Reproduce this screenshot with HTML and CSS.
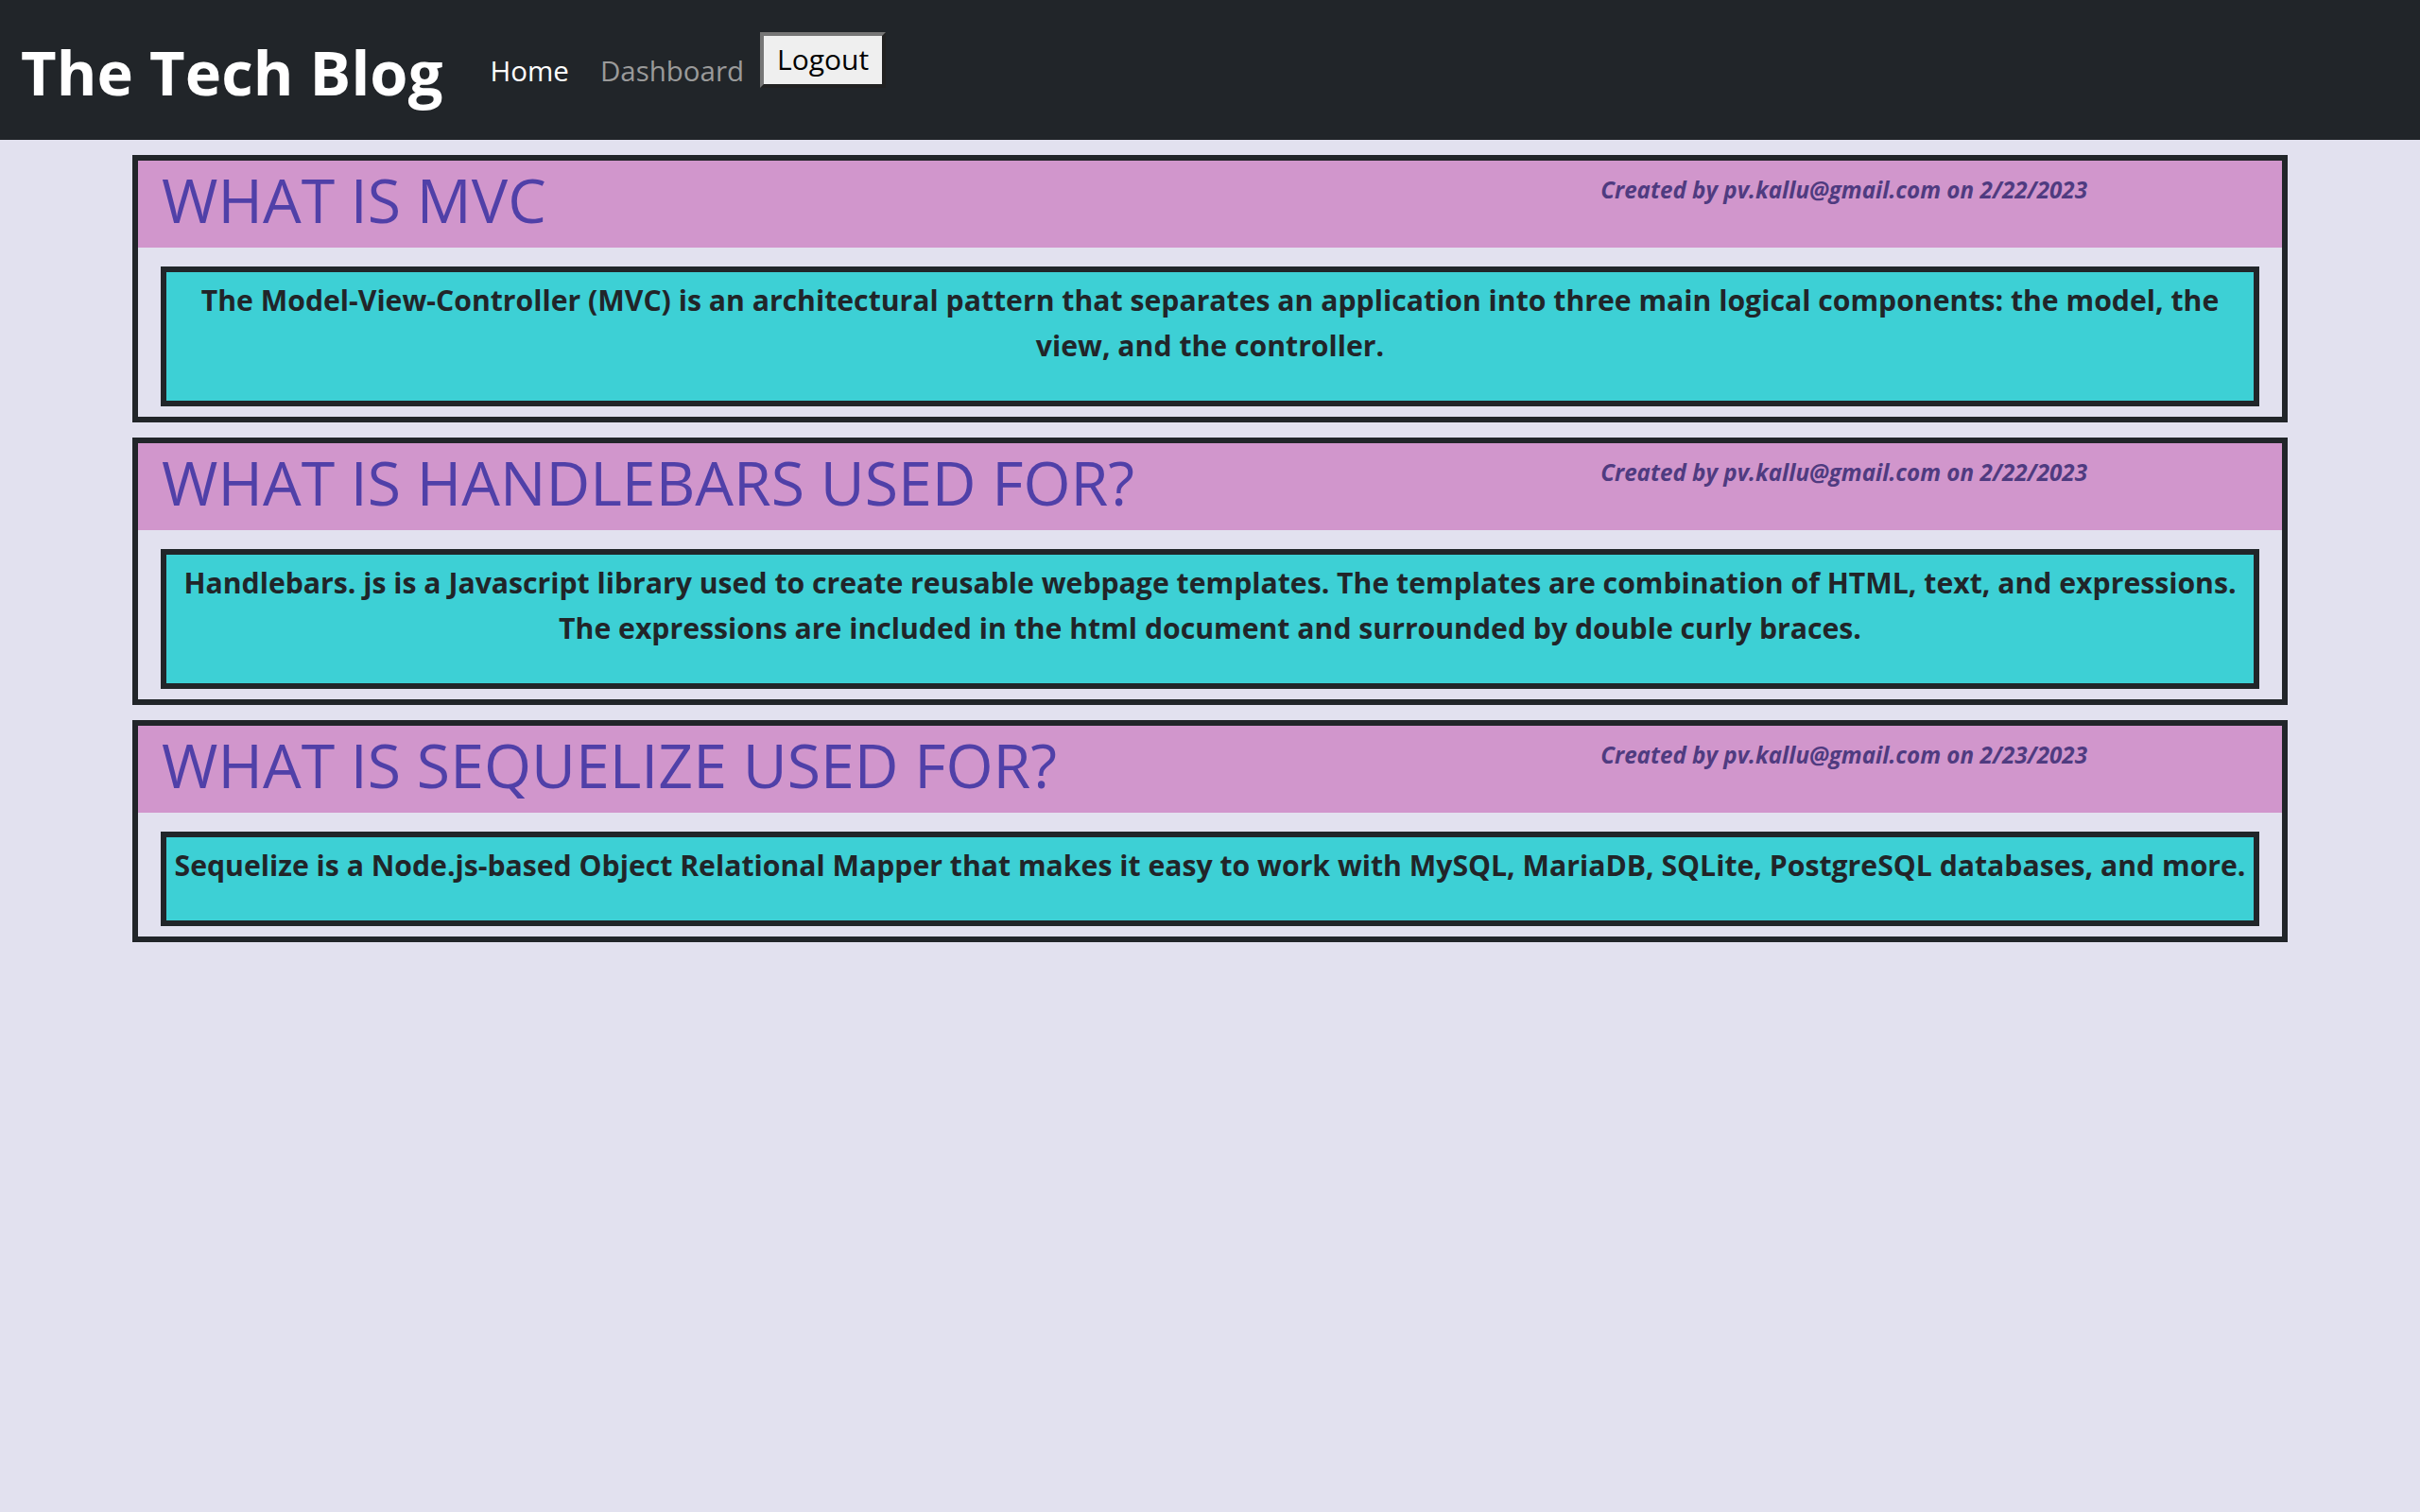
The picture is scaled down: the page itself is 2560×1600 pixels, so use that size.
FILE: index.html
```html
<!DOCTYPE html>
<html lang="en">
<head>
<meta charset="utf-8">
<title>The Tech Blog</title>
<link rel="stylesheet" href="styles.css">
</head>
<body>
<header class="site-header">
  <h1 class="brand">The Tech Blog</h1>
  <nav class="nav">
    <a class="nav-link active" href="#">Home</a>
    <a class="nav-link" href="#">Dashboard</a>
    <button class="logout" type="button">Logout</button>
  </nav>
</header>
<main class="posts">
  <article class="post">
    <div class="post-head">
      <h2 class="post-title">WHAT IS MVC</h2>
      <p class="post-meta">Created by pv.kallu@gmail.com on 2/22/2023</p>
    </div>
    <div class="post-body">
      <p>The Model-View-Controller (MVC) is an architectural pattern that separates an application into three main logical components: the model, the view, and the controller.</p>
    </div>
  </article>
  <article class="post">
    <div class="post-head">
      <h2 class="post-title">WHAT IS HANDLEBARS USED FOR?</h2>
      <p class="post-meta">Created by pv.kallu@gmail.com on 2/22/2023</p>
    </div>
    <div class="post-body">
      <p>Handlebars. js is a Javascript library used to create reusable webpage templates. The templates are combination of HTML, text, and expressions. The expressions are included in the html document and surrounded by double curly braces.</p>
    </div>
  </article>
  <article class="post">
    <div class="post-head">
      <h2 class="post-title">WHAT IS SEQUELIZE USED FOR?</h2>
      <p class="post-meta">Created by pv.kallu@gmail.com on 2/23/2023</p>
    </div>
    <div class="post-body">
      <p>Sequelize is a Node.js-based Object Relational Mapper that makes it easy to work with MySQL, MariaDB, SQLite, PostgreSQL databases, and more.</p>
    </div>
  </article>
</main>
</body>
</html>
```
FILE: styles.css
```css
html, body {
  margin: 0;
  padding: 0;
}

body {
  background: #e2e1ef;
  font-family: "Open Sans", "Noto Sans", sans-serif;
  color: #212529;
  min-height: 1600px;
}

.site-header {
  display: flex;
  align-items: flex-start;
  height: 148px;
  box-sizing: border-box;
  padding-left: 22px;
  background: #212529;
}

.brand {
  margin: 32px 0 0;
  font-size: 65px;
  font-weight: 700;
  line-height: 88px;
  color: #ffffff;
  letter-spacing: 0.1px;
}

.nav {
  display: flex;
  align-items: flex-start;
  margin: 34px 0 0 50px;
}

.nav-link {
  margin-top: 21px;
  font-size: 29.5px;
  line-height: 40px;
  color: #9a9a9a;
  text-decoration: none;
}

.nav-link + .nav-link {
  margin-left: 33px;
}

.nav-link.active {
  color: #ffffff;
}

.logout {
  margin-left: 17px;
  width: 133px;
  height: 59px;
  padding: 0 0 2px;
  border: 4px outset #767676;
  background: #efefef;
  color: #000000;
  font-family: "Open Sans", "Noto Sans", sans-serif;
  font-size: 30px;
  line-height: 36px;
}

.posts {
  display: flex;
  flex-direction: column;
  gap: 16px;
  width: 89.0625%;
  margin: 16px auto 0;
}

.post {
  border: 6px solid #212529;
}

.post-head {
  display: flex;
  align-items: flex-start;
  height: 92px;
  box-sizing: border-box;
  padding: 9px 0 0 25px;
  background: #d196cc;
}

.post-title {
  margin: 0;
  font-size: 64.4px;
  font-weight: 400;
  line-height: 64px;
  color: #5040a8;
}

.post-meta {
  margin: 5px 206px 0 auto;
  font-size: 24.2px;
  font-weight: 700;
  font-style: italic;
  line-height: 33px;
  color: #4f3b80;
}

.post-body {
  margin: 20px 24px 11px;
  border: 6px solid #212529;
  background: #3dd0d5;
}

.post-body p {
  margin: 0;
  padding: 6px 4px 34px;
  font-size: 30.2px;
  font-weight: 700;
  line-height: 48px;
  text-align: center;
}
```
